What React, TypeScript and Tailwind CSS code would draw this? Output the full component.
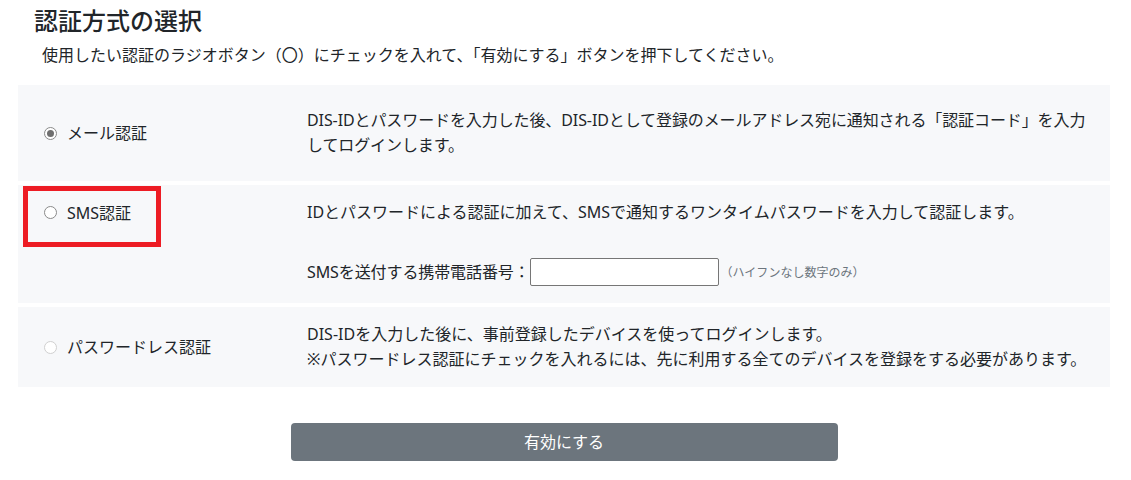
import React from "react";

function Radio({ checked, disabled }: { checked?: boolean; disabled?: boolean }) {
  return (
    <span
      className={
        "flex h-[13px] w-[13px] shrink-0 items-center justify-center rounded-full border bg-white " +
        (disabled ? "border-[#d0d0d0]" : "border-[#8a8a8a]")
      }
    >
      {checked ? <span className="h-[7px] w-[7px] rounded-full bg-[#6f6f6f]" /> : null}
    </span>
  );
}

export default function App() {
  return (
    <div
      className="min-h-[480px] bg-white text-[#212529]"
      style={{ fontFamily: '"Noto Sans", "Noto Sans CJK JP", sans-serif' }}
    >
      <div className="ml-[18px] w-[1092px] pt-[6px]">
        <h1 className="pl-[16px] text-[24px] font-medium leading-[30px]">認証方式の選択</h1>
        <p className="mt-[7px] pl-[24px] text-[16px] leading-[24px]">
          使用したい認証のラジオボタン（〇）にチェックを入れて、「有効にする」ボタンを押下してください。
        </p>

        <div className="mt-[18px] flex flex-col gap-[4px]">
          {/* Row 1 */}
          <div className="flex h-[96px] items-center bg-[#f7f8fa]">
            <div className="flex w-[289px] items-center gap-[10px] pl-[26px] text-[16px]">
              <Radio checked />
              <span>メール認証</span>
            </div>
            <div className="w-[790px] text-[16px] leading-[25px] tracking-[-0.1px]">
              DIS-IDとパスワードを入力した後、DIS-IDとして登録のメールアドレス宛に通知される「認証コード」を入力してログインします。
            </div>
          </div>

          {/* Row 2 */}
          <div className="relative flex h-[118px] bg-[#f7f8fa] pt-[15px]">
            <div className="flex h-[25px] w-[289px] items-center gap-[10px] pl-[26px] text-[16px]">
              <Radio />
              <span>SMS認証</span>
            </div>
            <div className="flex flex-col text-[16px] leading-[25px]">
              <div>IDとパスワードによる認証に加えて、SMSで通知するワンタイムパスワードを入力して認証します。</div>
              <div className="mt-[33px] flex items-center">
                <span className="tracking-[-0.1px]">SMSを送付する携帯電話番号：</span>
                <input
                  type="text"
                  className="h-[28px] w-[189px] rounded-[2px] border border-[#767676] bg-white"
                />
                <span className="ml-[2px] text-[12px] text-[#6c757d]">（ハイフンなし数字のみ）</span>
              </div>
            </div>
            <div className="pointer-events-none absolute left-[5px] top-[1px] h-[61px] w-[138px] border-[5px] border-[#ed1c24]" />
          </div>

          {/* Row 3 */}
          <div className="flex h-[80px] items-center bg-[#f7f8fa]">
            <div className="flex w-[289px] items-center gap-[10px] pl-[26px] text-[16px]">
              <Radio disabled />
              <span>パスワードレス認証</span>
            </div>
            <div className="text-[16px] leading-[25px]">
              <div>DIS-IDを入力した後に、事前登録したデバイスを使ってログインします。</div>
              <div>※パスワードレス認証にチェックを入れるには、先に利用する全てのデバイスを登録をする必要があります。</div>
            </div>
          </div>
        </div>

        <div className="mt-[36px] flex justify-center">
          <button className="h-[38px] w-[547px] rounded-[4px] bg-[#6c757d] text-[16px] text-white">
            有効にする
          </button>
        </div>
      </div>
    </div>
  );
}
